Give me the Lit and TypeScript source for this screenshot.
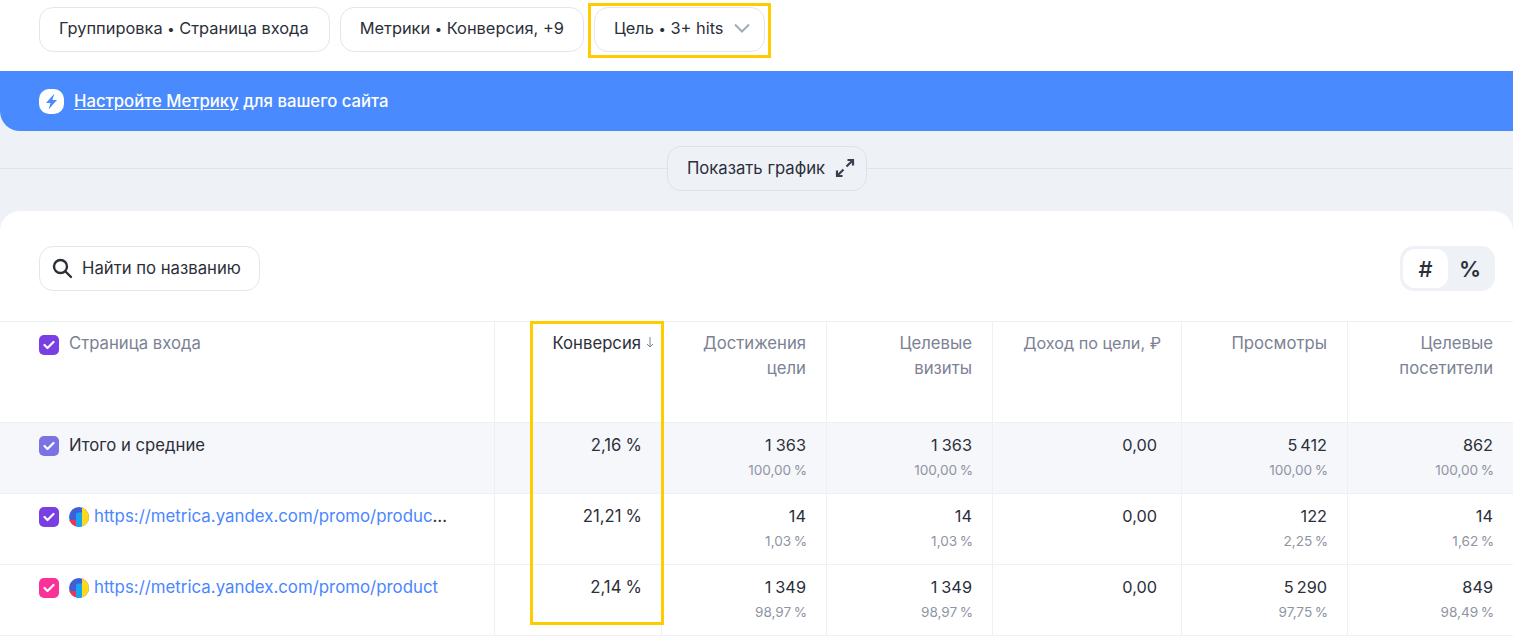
import { LitElement, html, css, svg } from 'lit';
import { customElement } from 'lit/decorators.js';

interface Metric {
  value: string;
  share?: string;
}

interface Row {
  name: string;
  link: boolean;
  box: string;
  conversion: string;
  metrics: Metric[];
  total?: boolean;
}

const COLUMNS = [
  { title: ['Конверсия'], active: true },
  { title: ['Достижения', 'цели'] },
  { title: ['Целевые', 'визиты'] },
  { title: ['Доход по цели, ₽'], tight: true },
  { title: ['Просмотры'] },
  { title: ['Целевые', 'посетители'] },
];

const ROWS: Row[] = [
  {
    name: 'Итого и средние',
    link: false,
    total: true,
    box: '#7b72e4',
    conversion: '2,16\u2005%',
    metrics: [
      { value: '1\u2005363', share: '100,00\u2009%' },
      { value: '1\u2005363', share: '100,00\u2009%' },
      { value: '0,00' },
      { value: '5\u2009412', share: '100,00\u2009%' },
      { value: '862', share: '100,00\u2009%' },
    ],
  },
  {
    name: 'https://metrica.yandex.com/promo/product/features',
    link: true,
    box: '#7a3fe4',
    conversion: '21,21\u2005%',
    metrics: [
      { value: '14', share: '1,03\u2009%' },
      { value: '14', share: '1,03\u2009%' },
      { value: '0,00' },
      { value: '122', share: '2,25\u2009%' },
      { value: '14', share: '1,62\u2009%' },
    ],
  },
  {
    name: 'https://metrica.yandex.com/promo/product',
    link: true,
    box: '#fb3199',
    conversion: '2,14\u2005%',
    metrics: [
      { value: '1\u2005349', share: '98,97\u2009%' },
      { value: '1\u2005349', share: '98,97\u2009%' },
      { value: '0,00' },
      { value: '5\u2009290', share: '97,75\u2009%' },
      { value: '849', share: '98,49\u2009%' },
    ],
  },
];

const favicon = svg`<svg class="favicon" viewBox="0 0 20 20" aria-hidden="true">
  <defs><clipPath id="fav"><circle cx="10" cy="10" r="10"></circle></clipPath></defs>
  <g clip-path="url(#fav)">
    <rect width="20" height="20" fill="#3f5fd6"></rect>
    <rect x="0" y="13" width="7" height="7" fill="#f0364f"></rect>
    <rect x="13" y="0" width="7" height="20" fill="#ffd91a"></rect>
    <path d="M7 8a2.5 2.5 0 0 1 2.5-2.5H13V20H7z" fill="#18a4f5"></path>
  </g>
</svg>`;

@customElement('app-root')
export class AppRoot extends LitElement {
  static styles = css`
    :host {
      display: block;
      height: 636px;
      overflow: hidden;
      background: #eef1f6;
      color: #2b2f3a;
      font-family: 'Inter', 'Noto Sans', sans-serif;
      font-size: 16.7px;
    }
    .top {
      display: flex;
      gap: 10px;
      height: 71px;
      padding: 7px 0 0 39px;
      box-sizing: border-box;
      background: #fff;
      font-size: 16.4px;
    }
    .top .btn {
      padding-bottom: 3px;
    }
    .top .chip-a {
      padding-right: 20px;
    }
    .dot {
      font-size: 13px;
    }
    .btn {
      position: relative;
      display: flex;
      align-items: center;
      box-sizing: border-box;
      height: 45px;
      padding: 0 19px;
      border: 1px solid #e3e6ee;
      border-radius: 14px;
      background: #fff;
      white-space: pre;
    }
    .btn .chev {
      width: 18px;
      height: 10px;
      margin-left: 9px;
      margin-right: -6px;
    }
    .mark {
      position: absolute;
      box-sizing: border-box;
      border: 3px solid #ffcc00;
      pointer-events: none;
    }
    .mark.chip {
      left: -7px;
      right: -7px;
      top: -5px;
      bottom: -7px;
    }
    .mark.col {
      left: 530px;
      top: -1px;
      width: 134px;
      height: 304px;
    }
    .banner {
      display: flex;
      align-items: center;
      gap: 10px;
      height: 60px;
      padding-left: 39px;
      background: #4a8aff;
      border-radius: 0 0 0 20px;
      color: #fff;
      font-weight: 500;
    }
    .banner u {
      text-underline-offset: 2px;
    }
    .bolt {
      width: 25px;
      height: 25px;
    }
    .chart-row {
      display: flex;
      justify-content: center;
      align-items: center;
      height: 80px;
      padding-left: 21px;
      background: linear-gradient(#dfe3ec, #dfe3ec) 0 37px / 100% 1px no-repeat;
    }
    .chart-row .btn {
      background: #eef1f6;
      border-color: #dde1ea;
      margin-top: -6px;
      padding-right: 11px;
    }
    .expand {
      width: 20px;
      height: 20px;
      margin-left: 10px;
    }
    .panel {
      background: #fff;
      border-radius: 20px 20px 0 0;
      height: 425px;
    }
    .tools {
      display: flex;
      justify-content: space-between;
      height: 110px;
      padding: 35px 18px 0 39px;
      box-sizing: border-box;
    }
    .search {
      padding: 0 18px 1px 11px;
    }
    .search svg {
      width: 22px;
      height: 22px;
      margin-right: 9px;
    }
    .toggle {
      display: flex;
      box-sizing: border-box;
      width: 95px;
      height: 45px;
      padding: 3px;
      border-radius: 14px;
      background: #eef1f6;
    }
    .toggle span {
      display: flex;
      align-items: center;
      justify-content: center;
      width: 45px;
      border-radius: 12px;
      font-size: 22px;
      font-weight: 600;
    }
    .toggle span.on {
      background: #fff;
      font-weight: 500;
    }
    .toggle span:last-child {
      width: 44px;
    }
    .table {
      position: relative;
      display: grid;
      grid-template-columns: 495px 167px 165px 166px 189px 166px 165px;
      grid-template-rows: 101px 71px 71px 71px;
      border-top: 1px solid #eef0f4;
    }
    .cell {
      box-sizing: border-box;
      padding: 10px 20px 0 0;
      border-bottom: 1px solid #eef0f4;
      border-right: 1px solid #eef0f4;
      text-align: right;
      line-height: 25px;
      min-width: 0;
    }
    .cell:nth-child(7n) {
      border-right: 0;
    }
    .cell.conv {
      padding-right: 19px;
    }
    .head {
      padding-top: 9px;
      color: #7b8294;
    }
    .head.active {
      position: relative;
      color: #2b2f3a;
    }
    .head.tight {
      font-size: 16.2px;
    }
    .head .box {
      margin-top: 4px;
    }
    .sort {
      position: absolute;
      left: 151px;
      top: 15px;
      width: 8px;
      height: 11px;
    }
    .name {
      display: flex;
      align-items: flex-start;
      gap: 10px;
      padding-left: 39px;
      text-align: left;
    }
    .total {
      background: #f6f7fb;
    }
    .box {
      flex: none;
      display: flex;
      align-items: center;
      justify-content: center;
      width: 20px;
      height: 20px;
      margin-top: 3px;
      border-radius: 5px;
    }
    .box svg {
      width: 12px;
      height: 10px;
    }
    .favicon {
      flex: none;
      width: 20px;
      height: 20px;
      margin: 3px -5px 0 0;
    }
    .url {
      min-width: 0;
      overflow: hidden;
      white-space: nowrap;
      text-overflow: ellipsis;
      padding-right: 24px;
      font-size: 16.85px;
    }
    .url a {
      color: #4a86ff;
      text-decoration: none;
    }
    .val {
      display: block;
      font-size: 16.3px;
    }
    .share {
      display: block;
      margin-right: -1px;
      color: #8f95a3;
      font-size: 13.6px;
    }
    .nil {
      padding-right: 24px;
    }
  `;

  private renderRow(row: Row) {
    const total = row.total ? 'total' : '';
    return html`
      <div class="cell name ${total}">
        <span class="box" style="background:${row.box}">${this.check()}</span>
        ${row.link
          ? html`${favicon}<span class="url"><a>${row.name}</a></span>`
          : html`<span>${row.name}</span>`}
      </div>
      <div class="cell conv ${total}">${row.conversion}</div>
      ${row.metrics.map(
        (m) => html`<div class="cell ${total} ${m.share ? '' : 'nil'}">
          <span class="val">${m.value}</span>
          ${m.share ? html`<span class="share">${m.share}</span>` : ''}
        </div>`,
      )}
    `;
  }

  private check() {
    return svg`<svg viewBox="0 0 12 10" aria-hidden="true"><path d="M1.5 5l3 3 6-6" fill="none" stroke="#fff" stroke-width="2.2" stroke-linecap="round" stroke-linejoin="round"></path></svg>`;
  }

  render() {
    return html`
      <div class="top">
        <div class="btn chip-a"><span>Группировка <span class="dot">•</span> Страница входа</span></div>
        <div class="btn"><span>Метрики <span class="dot">•</span> Конверсия, +9</span></div>
        <div class="btn">
          <span>Цель <span class="dot">•</span> 3+ hits</span>
          <svg class="chev" viewBox="0 0 18 10" aria-hidden="true">
            <path d="M2 1.5l7 7 7-7" fill="none" stroke="#a3a9b8" stroke-width="2"></path>
          </svg>
          <span class="mark chip"></span>
        </div>
      </div>
      <div class="banner">
        <svg class="bolt" viewBox="0 0 25 25" aria-hidden="true">
          <rect width="25" height="25" rx="10" fill="#fff"></rect>
          <path d="M15.5 4.5L7 14h4.5l-2 6.5L18 11h-4.7z" fill="#4a8aff"></path>
        </svg>
        <span><u>Настройте Метрику</u> для вашего сайта</span>
      </div>
      <div class="chart-row">
        <div class="btn">
          <span>Показать график</span>
          <svg class="expand" viewBox="0 0 20 20" aria-hidden="true">
            <path d="M11.5 8.5L18 2M12.5 2H18v5.5M8.5 11.5L2 18M2 12.5V18h5.5" fill="none" stroke="#3a3f4d" stroke-width="2.2"></path>
          </svg>
        </div>
      </div>
      <div class="panel">
        <div class="tools">
          <div class="btn search">
            <svg viewBox="0 0 22 22" aria-hidden="true">
              <circle cx="9.5" cy="9.5" r="6.5" fill="none" stroke="#2b2f3a" stroke-width="2.4"></circle>
              <path d="M14.5 14.5L20 20" stroke="#2b2f3a" stroke-width="2.4" stroke-linecap="round"></path>
            </svg>
            <span>Найти по названию</span>
          </div>
          <div class="toggle"><span class="on">#</span><span>%</span></div>
        </div>
        <div class="table">
          <div class="cell head name">
            <span class="box" style="background:#7a3fe4">${this.check()}</span>
            <span>Страница входа</span>
          </div>
          ${COLUMNS.map(
            (c) => html`<div class="cell head ${c.active ? 'active' : ''} ${c.tight ? 'tight' : ''}">
              ${c.title.map((t) => html`<div>${t}</div>`)}
              ${c.active
                ? html`<svg class="sort" viewBox="0 0 8 11" aria-hidden="true">
                    <path d="M4 0v9.5M1 7l3 3 3-3" fill="none" stroke="#7b8294" stroke-width="1"></path>
                  </svg>`
                : ''}
            </div>`,
          )}
          ${ROWS.map((r) => this.renderRow(r))}
          <span class="mark col"></span>
        </div>
      </div>
    `;
  }
}
